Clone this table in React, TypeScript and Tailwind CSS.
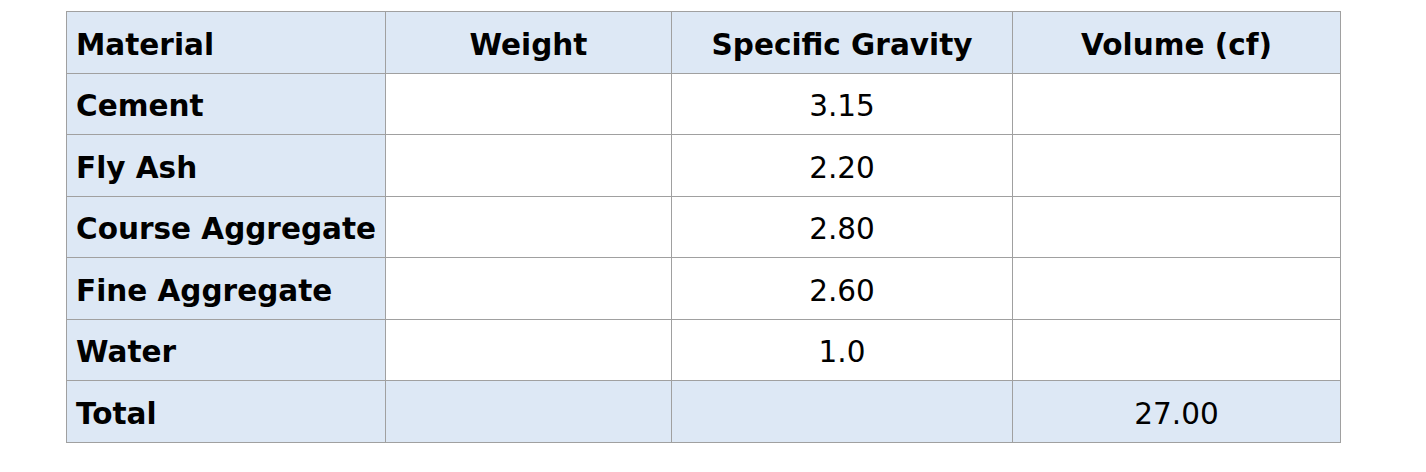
const rows = [
  { name: 'Cement', sg: '3.15' },
  { name: 'Fly Ash', sg: '2.20' },
  { name: 'Course Aggregate', sg: '2.80' },
  { name: 'Fine Aggregate', sg: '2.60' },
  { name: 'Water', sg: '1.0' },
];

export default function App() {
  const cell = 'border border-[#a0a0a0] h-[61.5px] p-0 pt-[6px]';
  return (
    <div className="w-[1426px] h-[472px] bg-white pt-[11px] pl-[66px]" style={{ fontFamily: "'DejaVu Sans', sans-serif" }}>
      <table className="border-collapse border border-[#a0a0a0] text-black text-[29.5px] leading-none">
        <colgroup>
          <col className="w-[319px]" />
          <col className="w-[286px]" />
          <col className="w-[341px]" />
          <col className="w-[328px]" />
        </colgroup>
        <thead>
          <tr className="bg-[#dde8f5] font-bold">
            <th className={`${cell} text-left pl-[9px]`}>Material</th>
            <th className={`${cell} text-center`}>Weight</th>
            <th className={`${cell} text-center`}>Specific Gravity</th>
            <th className={`${cell} text-center`}>Volume (cf)</th>
          </tr>
        </thead>
        <tbody>
          {rows.map((r) => (
            <tr key={r.name}>
              <td className={`${cell} bg-[#dde8f5] font-bold text-left pl-[9px]`}>{r.name}</td>
              <td className={cell}></td>
              <td className={`${cell} text-center`}>{r.sg}</td>
              <td className={cell}></td>
            </tr>
          ))}
          <tr className="bg-[#dde8f5]">
            <td className={`${cell} font-bold text-left pl-[9px]`}>Total</td>
            <td className={cell}></td>
            <td className={cell}></td>
            <td className={`${cell} text-center`}>27.00</td>
          </tr>
        </tbody>
      </table>
    </div>
  );
}
